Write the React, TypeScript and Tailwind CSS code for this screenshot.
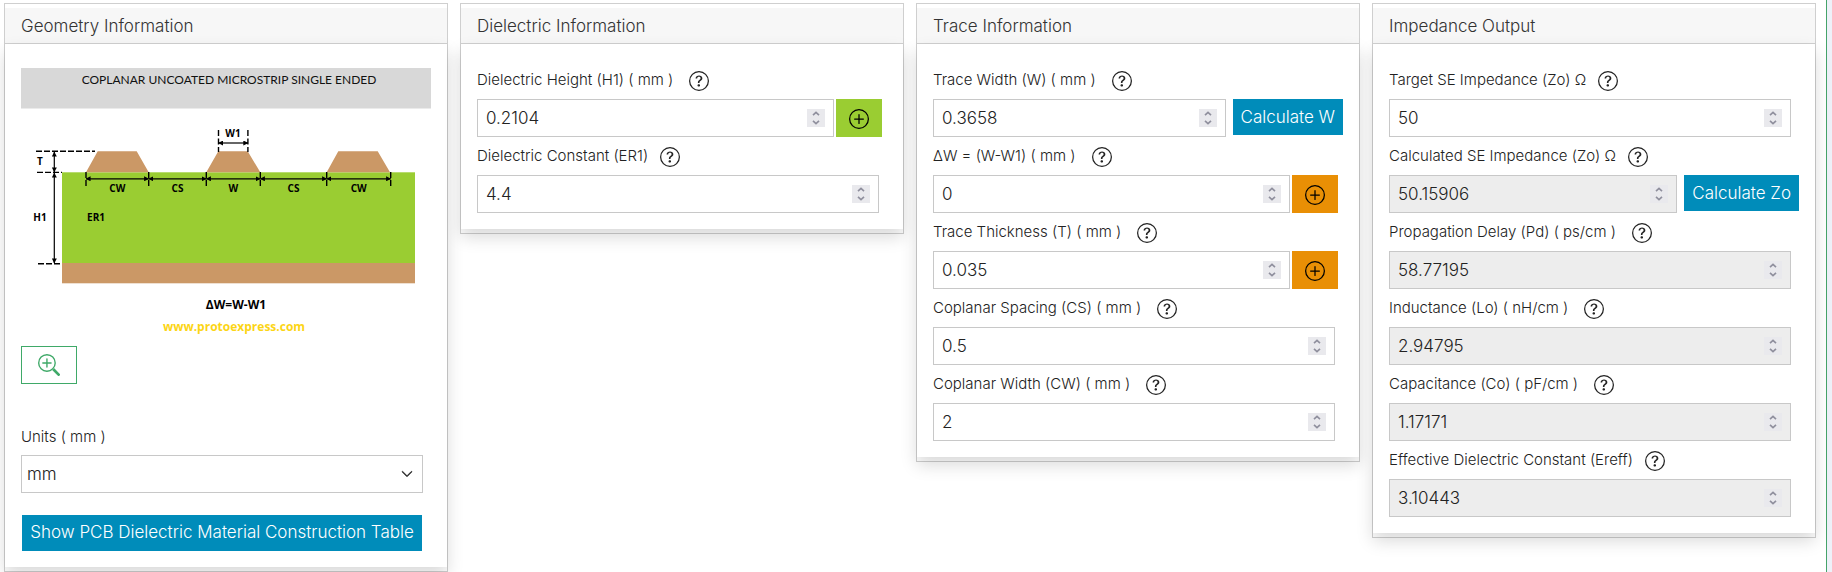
import React, { useId, useRef } from 'react';
import { BsChevronDown, BsPlusCircle, BsQuestionCircle, BsZoomIn } from 'react-icons/bs';

interface CardProps {
    title: string;
    children: React.ReactNode;
}

const Card: React.FC<CardProps> = ({ title, children }) => (
    <section className="border border-[#cfcfcf] bg-white py-1">
        <h2 className="h-9 border-b border-[#d0d0d0] bg-[#f7f7f7] px-4 text-[17px] leading-9 font-light text-[#333]">
            {title}
        </h2>
        <div className="bg-white px-4 pt-[17px] pb-4 shadow-[0_8px_16px_rgba(0,0,0,0.15)]">{children}</div>
    </section>
);

interface FieldProps {
    label: string;
    value: string;
    wideGap?: boolean;
    readOnly?: boolean;
    plus?: 'green' | 'orange';
    action?: string;
}

const Field: React.FC<FieldProps> = ({ label, value, wideGap, readOnly, plus, action }) => {
    const id = useId();
    const input = useRef<HTMLInputElement>(null);

    let rowClass = 'flex items-start pr-2';
    if (plus) rowClass = 'flex items-start gap-0.5 pr-[5px]';
    if (action) rowClass = 'flex items-start gap-[7px]';

    return (
        <div>
            <div className={wideGap ? 'flex h-[38px] items-center gap-4' : 'flex h-[38px] items-center gap-3'}>
                <label htmlFor={id} className="text-[15px] leading-5 font-light whitespace-nowrap">{label}</label>
                <button type="button" aria-label={`Help: ${label}`} className="mt-0.5">
                    <BsQuestionCircle size={20} />
                </button>
            </div>
            <div className={rowClass}>
                <div className="relative min-w-0 flex-1">
                    <input
                        ref={input}
                        id={id}
                        type="number"
                        step="any"
                        defaultValue={value}
                        readOnly={readOnly}
                        className={`block h-[38px] w-full border border-[#c8c8c8] pr-8 pl-2 text-[17px] font-light [appearance:textfield] ${readOnly ? 'bg-[#ededed]' : 'bg-white'}`}
                    />
                    <span className="absolute top-[10px] right-[9px] flex h-[18px] w-[18px] flex-col bg-[#e9e9ed] text-[#8f8f9d]">
                        <button type="button" aria-label="Increase" onClick={() => input.current?.stepUp()} className="flex h-[9px] items-end justify-center pb-0.5">
                            <svg width="8" height="5" viewBox="0 0 8 5" fill="none" stroke="currentColor" strokeWidth="1.6">
                                <path d="M1 4.2 4 1.3 7 4.2" />
                            </svg>
                        </button>
                        <button type="button" aria-label="Decrease" onClick={() => input.current?.stepDown()} className="flex h-[9px] items-start justify-center pt-0.5">
                            <svg width="8" height="5" viewBox="0 0 8 5" fill="none" stroke="currentColor" strokeWidth="1.6">
                                <path d="M1 0.8 4 3.7 7 0.8" />
                            </svg>
                        </button>
                    </span>
                </div>
                {plus && (
                    <button
                        type="button"
                        aria-label={`Add ${label}`}
                        className={`flex h-[38px] w-[46px] items-center justify-center pt-0.5 text-black ${plus === 'green' ? 'bg-[#9acd32]' : 'bg-[#e98f05]'}`}
                    >
                        <BsPlusCircle size={20} />
                    </button>
                )}
                {action && (
                    <button type="button" className="h-9 bg-[#008cba] px-2 pt-0.5 text-[17px] font-light whitespace-nowrap text-white">
                        {action}
                    </button>
                )}
            </div>
        </div>
    );
};

const ticks = [65, 127.7, 185.3, 239.3, 305.7, 369.7];
const spans = ['CW', 'CS', 'W', 'CS', 'CW'];

const Diagram = () => (
    <svg viewBox="0 0 410 278" className="block w-full" fontFamily="'Open Sans', sans-serif" fontWeight="700" fontSize="10" textAnchor="middle">
        <defs>
            <marker id="arrow" viewBox="0 0 6 6" refX="5.5" refY="3" markerWidth="5" markerHeight="5" markerUnits="userSpaceOnUse" orient="auto-start-reverse">
                <path d="M0 0 6 3 0 6z" />
            </marker>
        </defs>
        <rect width="410" height="40.5" fill="#d8d8d8" />
        <text x="208" y="16" fontFamily="Lato, sans-serif" fontWeight="400" fontSize="12" fill="#111">
            COPLANAR UNCOATED MICROSTRIP SINGLE ENDED
        </text>

        <rect x="41" y="104.3" width="353" height="91" fill="#9acd32" />
        <rect x="41" y="195" width="353" height="20.3" fill="#cb9866" />
        <path
            fill="#cb9866"
            d="M65 104.3 76.7 83.3H115.7L127.7 104.3zM185.3 104.3 197.3 83.3H226.7L239.3 104.3zM305.7 104.3 317.3 83.3H356.7L369 104.3z"
        />

        <g stroke="#000" strokeWidth="1.4" fill="none">
            {ticks.map(x => <path key={x} d={`M${x} 104v14`} strokeDasharray="6 2" />)}
            <path d="M197.5 62v22M226.9 62v22" strokeDasharray="6 2.5" />
            <path d="M15 83.2h59M16 104.4h25M17 195.7h22" strokeDasharray="6 2" />
        </g>
        <g stroke="#000" strokeWidth="1.2">
            {spans.map((_, i) => (
                <line key={i} x1={ticks[i]} x2={ticks[i + 1]} y1="110.8" y2="110.8" markerStart="url(#arrow)" markerEnd="url(#arrow)" />
            ))}
            <line x1="197.5" x2="226.9" y1="75" y2="75" markerStart="url(#arrow)" markerEnd="url(#arrow)" />
            <line x1="33.3" x2="33.3" y1="84" y2="104" markerStart="url(#arrow)" markerEnd="url(#arrow)" />
            <line x1="33.3" x2="33.3" y1="105" y2="195" markerStart="url(#arrow)" markerEnd="url(#arrow)" />
        </g>

        {spans.map((name, i) => (
            <text key={i} x={(ticks[i] + ticks[i + 1]) / 2} y="124">{name}</text>
        ))}
        <text x="212" y="69">W1</text>
        <text x="19" y="97">T</text>
        <text x="19" y="153">H1</text>
        <text x="75" y="153">ER1</text>
        <text x="215" y="241" fontSize="12">ΔW=W-W1</text>
        <text x="213" y="263" fontSize="12" fill="#fcd515">www.protoexpress.com</text>
    </svg>
);

const App = () => (
    <div className="min-h-screen bg-[#eef1f9] pr-[5px] font-[Inter,sans-serif] text-[#222]">
        <main className="grid min-h-screen grid-cols-4 items-start gap-3 border-r border-[#45a46b] bg-white pt-[3px] pr-[10px] pl-1">
            <Card title="Geometry Information">
                <div className="pt-[7px]">
                    <Diagram />
                </div>
                <button type="button" aria-label="Enlarge diagram" className="flex h-[38px] w-14 items-center justify-center border border-[#3fa968] text-[#3fa968]">
                    <BsZoomIn size={22} />
                </button>
                <div className="pt-[42px] pr-2">
                    <label htmlFor="units" className="block h-[29px] text-[15px] leading-[22px] font-light">Units ( mm )</label>
                    <div className="relative">
                        <select id="units" defaultValue="mm" className="block h-[38px] w-full appearance-none border border-[#c8c8c8] bg-white pt-0.5 pl-[5px] text-[17px] font-light">
                            <option>mm</option>
                            <option>inch</option>
                            <option>mils</option>
                        </select>
                        <BsChevronDown size={12} strokeWidth={1} className="pointer-events-none absolute top-[13px] right-[10px]" />
                    </div>
                    <button type="button" className="mx-px mt-[22px] block h-9 w-[calc(100%-2px)] bg-[#008cba] text-[17px] font-light whitespace-nowrap text-white">
                        Show PCB Dielectric Material Construction Table
                    </button>
                </div>
            </Card>

            <Card title="Dielectric Information">
                <Field label="Dielectric Height (H1) ( mm )" value="0.2104" wideGap plus="green" />
                <Field label="Dielectric Constant (ER1)" value="4.4" />
            </Card>

            <Card title="Trace Information">
                <Field label="Trace Width (W) ( mm )" value="0.3658" wideGap action="Calculate W" />
                <Field label="ΔW = (W-W1) ( mm )" value="0" wideGap plus="orange" />
                <Field label="Trace Thickness (T) ( mm )" value="0.035" wideGap plus="orange" />
                <Field label="Coplanar Spacing (CS) ( mm )" value="0.5" wideGap />
                <Field label="Coplanar Width (CW) ( mm )" value="2" wideGap />
            </Card>

            <Card title="Impedance Output">
                <Field label="Target SE Impedance (Zo) Ω" value="50" />
                <Field label="Calculated SE Impedance (Zo) Ω" value="50.15906" readOnly action="Calculate Zo" />
                <Field label="Propagation Delay (Pd) ( ps/cm )" value="58.77195" wideGap readOnly />
                <Field label="Inductance (Lo) ( nH/cm )" value="2.94795" wideGap readOnly />
                <Field label="Capacitance (Co) ( pF/cm )" value="1.17171" wideGap readOnly />
                <Field label="Effective Dielectric Constant (Ereff)" value="3.10443" readOnly />
            </Card>
        </main>
    </div>
);

export default App;
